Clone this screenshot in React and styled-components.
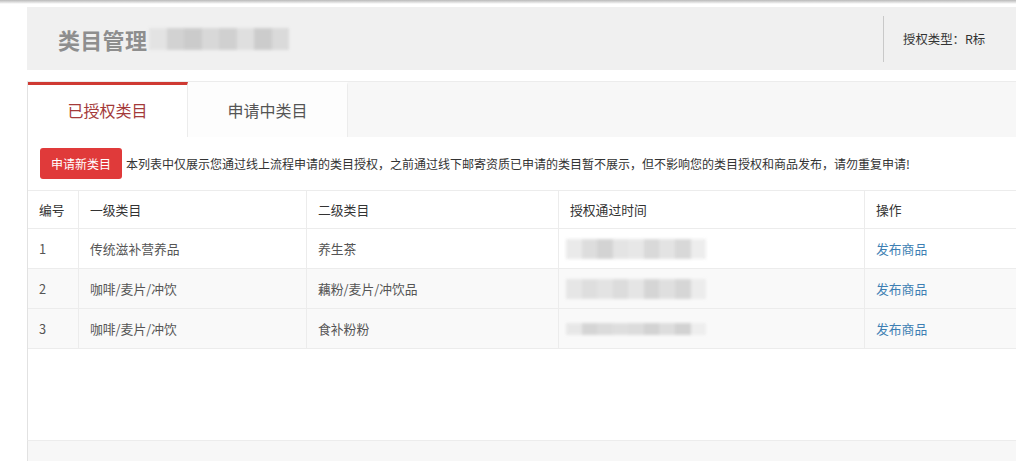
import React from "react";
import styled, { createGlobalStyle } from "styled-components";

const GlobalStyle = createGlobalStyle`
  html, body { margin: 0; padding: 0; background: #fff; }
  body {
    font-family: "Noto Sans CJK SC", "Noto Sans", "Liberation Sans", sans-serif;
    color: #333;
    overflow: hidden;
  }
  * { box-sizing: border-box; }
`;

const TopShade = styled.div`
  height: 4px;
  background: linear-gradient(#b9b9b9, #e9e9e9 70%, #fff);
`;

const Page = styled.div`
  padding: 3px 0 0 27px;
  width: 1016px;
`;

const Header = styled.div`
  height: 63px;
  background: #f0f0f0;
  display: flex;
  align-items: center;
  padding-left: 31px;
`;

const Title = styled.h1`
  margin: 0;
  font-size: 22px;
  font-weight: 700;
  color: #8e8e8e;
  letter-spacing: 0.3px;
  line-height: 1;
`;

const Masked = styled.div`
  display: flex;
  align-items: center;
  height: ${(p) => p.$h || 22}px;
  margin-left: ${(p) => p.$ml || 0}px;
  width: ${(p) => p.$w}px;
  filter: blur(1.4px);
  opacity: 0.9;
`;

const MaskCell = styled.span`
  flex: 1;
  height: 100%;
  background: ${(p) => p.$c};
`;

const HeaderSpacer = styled.div`
  flex: 1;
`;

const AuthType = styled.div`
  height: 46px;
  width: 133px;
  border-left: 1px solid #c9c9c9;
  display: flex;
  align-items: center;
  padding-left: 19px;
  font-size: 12.4px;
  color: #333;
`;

const TabBar = styled.div`
  margin-top: 11px;
  height: 56px;
  display: flex;
  background: #f7f7f7;
  border-top: 1px solid #ececec;
  border-left: 1px solid #e2e2e2;
`;

const Tab = styled.div`
  width: 160px;
  display: flex;
  align-items: center;
  justify-content: center;
  font-size: 16px;
  background: ${(p) => (p.$active ? "#fff" : "#fdfdfd")};
  color: ${(p) => (p.$active ? "#a43a3a" : "#555")};
  border-top: 3px solid ${(p) => (p.$active ? "#cf3a33" : "transparent")};
  border-right: 1px solid #ececec;
  padding-bottom: 2px;
`;

const Panel = styled.div`
  border-left: 1px solid #e2e2e2;
  background: #fff;
  height: 303px;
  display: flex;
  flex-direction: column;
`;

const Toolbar = styled.div`
  height: 53px;
  display: flex;
  align-items: center;
  padding: 0 12px;
  gap: 4px;
`;

const RedButton = styled.button`
  width: 82px;
  height: 31px;
  border: none;
  border-radius: 3px;
  background: #e03a3a;
  color: #fff;
  font-family: inherit;
  font-size: 12px;
  padding: 0;
  margin-top: 0;
`;

const Notice = styled.span`
  font-size: 12px;
  color: #333;
  white-space: nowrap;
`;

const Table = styled.div`
  display: grid;
  grid-template-columns: 51px 228px 252px 306px 152px;
  border-top: 1px solid #ececec;
`;

const Cell = styled.div`
  height: ${(p) => (p.$head ? 38 : 40)}px;
  display: flex;
  align-items: center;
  padding-left: 11px;
  font-size: 12.8px;
  color: ${(p) => (p.$head ? "#333" : "#555")};
  background: ${(p) => (p.$shade ? "#f9f9f9" : "#fff")};
  border-bottom: 1px solid #ececec;
  border-right: ${(p) => (p.$last ? "none" : "1px solid #ececec")};
`;

const Link = styled.a`
  color: #3d7fb3;
  text-decoration: none;
  font-size: 12.8px;
`;

const Filler = styled.div`
  flex: 1;
`;

const Footer = styled.div`
  height: 22px;
  background: #f7f7f7;
  border-top: 1px solid #ececec;
  border-left: 1px solid #e2e2e2;
`;

const titleMask = ["#e2e2e2", "#cfcfcf", "#c8c8c8", "#d6d6d6", "#cdcdcd", "#dedede", "#c9c9c9", "#d8d8d8"];
const dateMasks = [
  ["#e8e8e8", "#dadada", "#cfcfcf", "#e2e2e2", "#e5e5e5", "#d5d5d5", "#e0e0e0", "#d4d4d4", "#ececec"],
  ["#e4e4e4", "#dcdcdc", "#e1e1e1", "#d9d9d9", "#e3e3e3", "#d2d2d2", "#dddddd", "#d3d3d3", "#ebebeb"],
  ["#e6e6e6", "#d2d2d2", "#d8d8d8", "#dcdcdc", "#d9d9d9", "#cfcfcf", "#dadada", "#cecece", "#ededed"],
];

const rows = [
  { no: "1", first: "传统滋补营养品", second: "养生茶" },
  { no: "2", first: "咖啡/麦片/冲饮", second: "藕粉/麦片/冲饮品" },
  { no: "3", first: "咖啡/麦片/冲饮", second: "食补粉粉" },
];

const MaskBlock = ({ colors, w, h, ml }) => (
  <Masked $w={w} $h={h} $ml={ml} aria-hidden="true">
    {colors.map((c, i) => (
      <MaskCell key={i} $c={c} />
    ))}
  </Masked>
);

export default function App() {
  return (
    <>
      <GlobalStyle />
      <TopShade />
      <Page>
        <Header>
          <Title>类目管理</Title>
          <MaskBlock colors={titleMask} w={140} h={22} ml={2} />
          <HeaderSpacer />
          <AuthType>授权类型：R标</AuthType>
        </Header>
        <TabBar>
          <Tab $active>已授权类目</Tab>
          <Tab>申请中类目</Tab>
        </TabBar>
        <Panel>
          <Toolbar>
            <RedButton>申请新类目</RedButton>
            <Notice>
              本列表中仅展示您通过线上流程申请的类目授权，之前通过线下邮寄资质已申请的类目暂不展示，但不影响您的类目授权和商品发布，请勿重复申请!
            </Notice>
          </Toolbar>
          <Table>
            <Cell $head>编号</Cell>
            <Cell $head>一级类目</Cell>
            <Cell $head>二级类目</Cell>
            <Cell $head>授权通过时间</Cell>
            <Cell $head $last>操作</Cell>
            {rows.map((r, i) => (
              <React.Fragment key={r.no}>
                <Cell $shade={i > 0}>{r.no}</Cell>
                <Cell $shade={i > 0}>{r.first}</Cell>
                <Cell $shade={i > 0}>{r.second}</Cell>
                <Cell $shade={i > 0}>
                  <MaskBlock colors={dateMasks[i]} w={140} h={i === 2 ? 12 : 20} ml={-4} />
                </Cell>
                <Cell $shade={i > 0} $last>
                  <Link href="#">发布商品</Link>
                </Cell>
              </React.Fragment>
            ))}
          </Table>
          <Filler />
        </Panel>
        <Footer />
      </Page>
    </>
  );
}
